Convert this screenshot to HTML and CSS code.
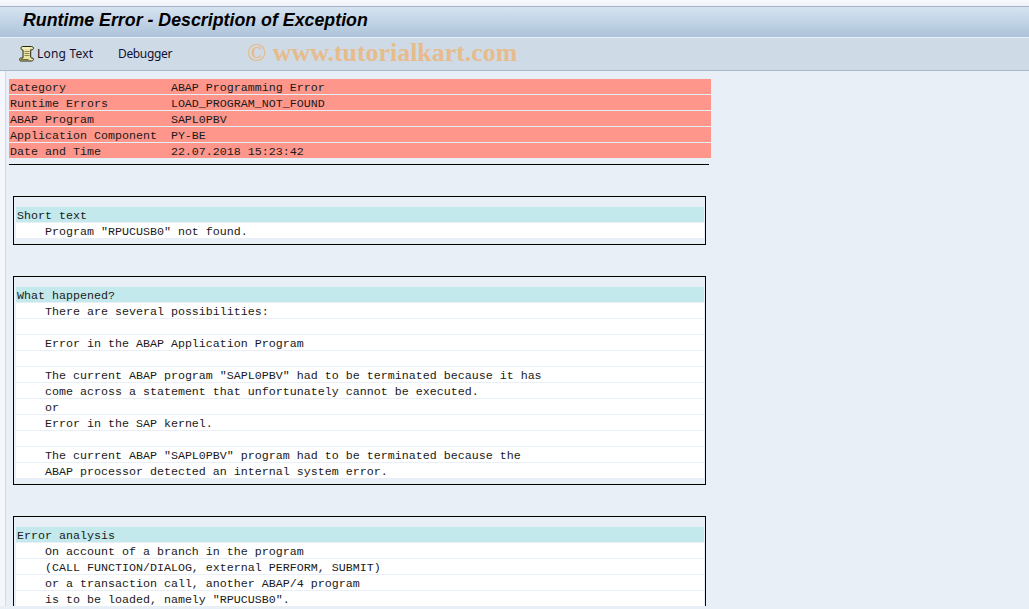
FILE: index.html
```html
<!DOCTYPE html>
<html lang="en">
<head>
<meta charset="utf-8">
<title>Runtime Error - Description of Exception</title>
<link rel="stylesheet" href="styles.css">
</head>
<body>
<div class="top-strip"></div>
<header class="title-bar"><h1>Runtime Error - Description of Exception</h1></header>
<nav class="toolbar">
  <button class="tool tool-long">
    <svg class="scroll-icon" width="15" height="16" viewBox="0 0 15 16">
      <path d="M3.5.5h9c1.2 0 2 .8 2 1.7 0 1-.8 1.6-1.8 1.6h-1V11c0 .5.4 1 1 1l1.300.2c.5.3.7.8.5 1.300-.3.8-1 1.500-2 1.500H2c-1 0-1.500-.7-1.500-1.500 0-1 .7-1.500 1.500-1.500h2V4H3.500C2.500 4 2 3.200 2 2.300 2 1.300 2.600.5 3.500.5z" fill="#ece4a4" stroke="#26260e"/>
      <path d="M5.500 5.500h5M5.500 7.500h5M5.500 9.500h5" stroke="#8d8a55"/>
      <path d="M1.500 13.500h8" stroke="#6d6a35"/>
      <path d="M4 2h7" stroke="#fffbd8"/>
    </svg>
    <span>Long Text</span>
  </button>
  <button class="tool tool-debug"><span>Debugger</span></button>
  <div class="watermark">© www.tutorialkart.com</div>
</nav>
<div class="workspace">
  <div class="side-strip"></div>
  <main class="content">
    <section class="summary">
      <div class="row-red">Category               ABAP Programming Error</div>
      <div class="row-red">Runtime Errors         LOAD_PROGRAM_NOT_FOUND</div>
      <div class="row-red">ABAP Program           SAPL0PBV</div>
      <div class="row-red">Application Component  PY-BE</div>
      <div class="row-red">Date and Time          22.07.2018 15:23:42</div>
    </section>
    <hr class="rule">
    <section class="box">
      <div class="row head">Short text</div>
      <div class="row">    Program "RPUCUSB0" not found.</div>
    </section>
    <section class="box">
      <div class="row head">What happened?</div>
      <div class="row">    There are several possibilities:</div>
      <div class="row"> </div>
      <div class="row">    Error in the ABAP Application Program</div>
      <div class="row"> </div>
      <div class="row">    The current ABAP program "SAPL0PBV" had to be terminated because it has</div>
      <div class="row">    come across a statement that unfortunately cannot be executed.</div>
      <div class="row">    or</div>
      <div class="row">    Error in the SAP kernel.</div>
      <div class="row"> </div>
      <div class="row">    The current ABAP "SAPL0PBV" program had to be terminated because the</div>
      <div class="row">    ABAP processor detected an internal system error.</div>
    </section>
    <section class="box">
      <div class="row head">Error analysis</div>
      <div class="row">    On account of a branch in the program</div>
      <div class="row">    (CALL FUNCTION/DIALOG, external PERFORM, SUBMIT)</div>
      <div class="row">    or a transaction call, another ABAP/4 program</div>
      <div class="row">    is to be loaded, namely "RPUCUSB0".</div>
      <div class="row"> </div>
    </section>
  </main>
</div>
</body>
</html>
```

FILE: styles.css
```css
* { box-sizing: border-box; }
html, body { margin: 0; padding: 0; height: 609px; overflow: hidden; }
body { background: #e8eff7; display: flex; flex-direction: column; font-family: "Liberation Mono", monospace; }

.top-strip { height: 7px; flex: none; background: linear-gradient(#f8f9fc, #eef1f7 85%, #a6b2c9 85%); }

.title-bar {
  height: 30px; flex: none; padding-left: 23px; display: flex; align-items: center;
  background: linear-gradient(#d6e3f0, #adc3da);
}
.title-bar h1 {
  margin: 0; font: italic bold 17.8px/1 "Liberation Sans", sans-serif; color: #000;
  position: relative; top: -1px; white-space: nowrap;
}

.toolbar {
  height: 34px; flex: none; display: flex; align-items: center; padding: 0 0 1px 19px;
  background: #cedbe6; border-top: 1px solid #eaf0f6; border-bottom: 1px solid #a9b8cb;
}
.tool {
  display: flex; align-items: center; border: 0; padding: 0; margin: 0; background: none; color: #101030;
  font: 12px/1 "Noto Sans", sans-serif; white-space: nowrap;
}
.tool-long { width: 99px; gap: 3px; letter-spacing: .2px; }
.tool-debug { width: 129px; letter-spacing: -.35px; }
.watermark {
  font: bold 25.9px/1 "Liberation Serif", serif; color: #e7bb8c; white-space: nowrap; position: relative; top: -1px;
}

.workspace { height: 535px; flex: none; display: flex; overflow: hidden; }
.side-strip { width: 6px; flex: none; background: #f4f6fb; border-right: 1px solid #d4dbe8; }
.content { flex: none; width: 703px; padding: 8px 0 0 3px; font-size: 11.667px; line-height: 15px; color: #1a1a1a; }

.summary { display: flex; flex-direction: column; gap: 1px; margin-right: -2px; }
.row-red { height: 15px; background: #ff968c; padding: 2px 0 0 1px; white-space: pre; }

.rule { margin: 6px 0 31px; height: 1px; width: 700px; border: 0; background: #000; }

.box {
  margin: 0 0 31px 4px; width: 693px; padding: 10px 1px 6px 2px;
  border: 1px solid #000; display: flex; flex-direction: column; gap: 1px;
}
.row { height: 15px; background: #fff; padding: 2px 0 0 1px; white-space: pre; }
.row.head { background: #c3e9ec; }
```
